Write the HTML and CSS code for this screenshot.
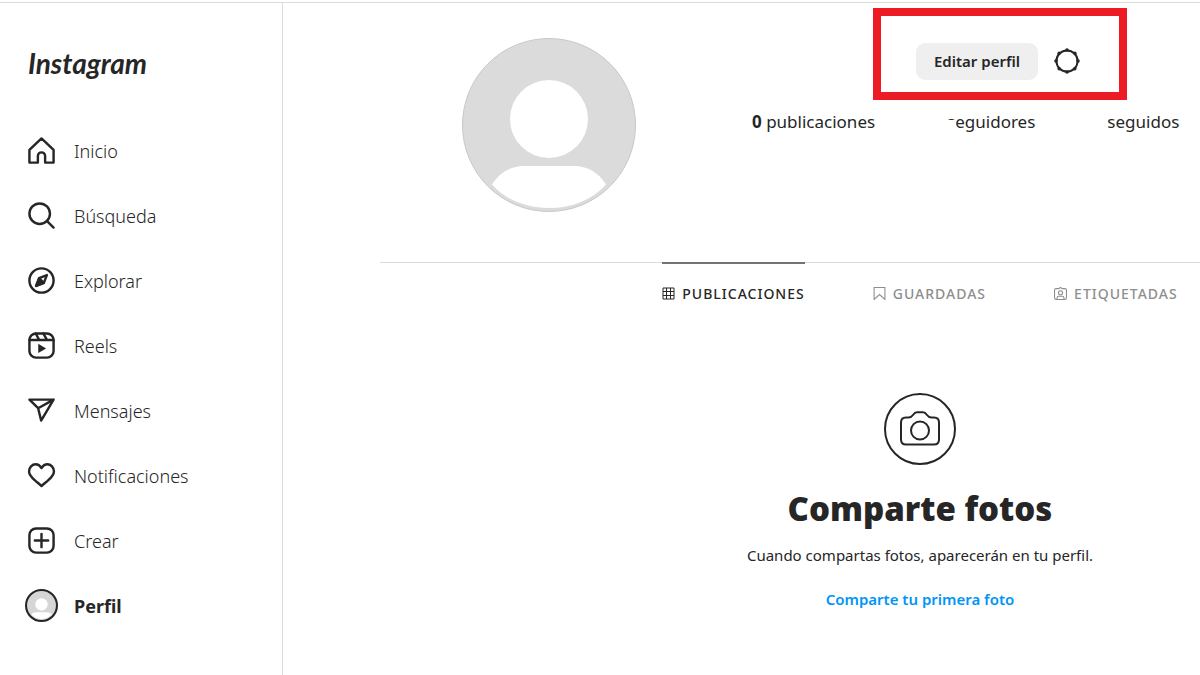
FILE: index.html
```html
<!DOCTYPE html>
<html lang="es">

<head>
  <meta charset="UTF-8">
  <meta name="viewport" content="width=device-width, initial-scale=1.0">
  <title>Instagram</title>
  <link rel="stylesheet" href="styles.css">
</head>

<body>
  <div class="page">
    <aside class="sidebar">
      <a class="logo" href="#">Instagram</a>
      <nav class="menu">
        <a class="menu-item" href="#">
          <span class="menu-icon">
            <svg viewBox="0 0 24 24"><path d="M9.005 16.545a2.997 2.997 0 0 1 2.997-2.997A2.997 2.997 0 0 1 15 16.545V22h7V11.543L12 2 2 11.543V22h7.005Z"/></svg>
          </span>
          Inicio
        </a>
        <a class="menu-item" href="#">
          <span class="menu-icon">
            <svg viewBox="0 0 24 24"><circle cx="10.5" cy="10.5" r="8.5"/><path d="m16.6 16.6 5.4 5.4"/></svg>
          </span>
          Búsqueda
        </a>
        <a class="menu-item" href="#">
          <span class="menu-icon">
            <svg viewBox="0 0 24 24"><circle cx="12" cy="12" r="10"/><path d="m13.94 13.95-6.4 2.51 2.52-6.4 6.39-2.51Z"/><path class="fill" d="m10.06 10.06 3.88 3.89-6.4 2.51Z"/></svg>
          </span>
          Explorar
        </a>
        <a class="menu-item" href="#">
          <span class="menu-icon">
            <svg viewBox="0 0 24 24"><rect x="2" y="2" width="20" height="20" rx="5.5"/><path d="M2.05 7.5h19.9M7.2 2.1l3 5.4M13.5 2l3 5.4"/><path class="fill play" d="M9.3 10.600v7.600l6.500-3.800Z"/></svg>
          </span>
          Reels
        </a>
        <a class="menu-item" href="#">
          <span class="menu-icon">
            <svg viewBox="0 0 24 24"><path d="M22 3 9.218 10.083M11.698 20.334 22 3.001H2l7.218 7.083 2.480 10.250Z"/></svg>
          </span>
          Mensajes
        </a>
        <a class="menu-item" href="#">
          <span class="menu-icon">
            <svg viewBox="0 0 24 24"><path d="M16.8 2.700c-2.300 0-3.600 1.200-4.800 3.100-1.200-1.900-2.500-3.100-4.800-3.100-3 0-5.500 2.600-5.500 5.900 0 3.100 2.400 5.200 4.900 7.400 1.900 1.700 3.900 3.300 5.400 4.700 1.500-1.400 3.500-3 5.400-4.700 2.500-2.200 4.900-4.300 4.900-7.400 0-3.300-2.500-5.900-5.500-5.900Z"/></svg>
          </span>
          Notificaciones
        </a>
        <a class="menu-item" href="#">
          <span class="menu-icon">
            <svg viewBox="0 0 24 24"><rect x="2" y="2" width="20" height="20" rx="5.5"/><path d="M6.5 12h11M12 6.500v11"/></svg>
          </span>
          Crear
        </a>
        <a class="menu-item active" href="#">
          <span class="menu-icon">
            <svg class="menu-avatar" viewBox="0 0 32 32"><circle class="ring" cx="16" cy="16" r="15"/><circle class="shape" cx="16" cy="15" r="6"/><path class="shape" d="M6 24.5q2-2 5-2h10q3 0 5 2a13 13 0 0 1-20 0Z"/></svg>
          </span>
          Perfil
        </a>
      </nav>
    </aside>

    <main class="main">
      <div class="profile">
        <header class="profile-header">
          <div class="profile-photo">
            <svg class="avatar" viewBox="0 0 174 174">
              <circle class="avatar-bg" cx="87" cy="87" r="86.5"/>
              <circle class="avatar-shape" cx="87" cy="81" r="39"/>
              <path class="avatar-shape" d="M30 146.500C38 134 49 128 62 128h50c13 0 24 6 32 18.500C130 162 110 170 87 170s-43-8-57-23.500Z"/>
            </svg>
          </div>
          <div class="profile-info">
            <div class="actions">
              <button class="edit-button" type="button">Editar perfil</button>
              <button class="settings-button" type="button" aria-label="Opciones">
                <svg viewBox="0 0 26 26">
                  <circle cx="13" cy="13" r="10.6"/>
                  <g class="fill">
                    <circle cx="13" cy="2" r="1.8"/>
                    <circle cx="20.8" cy="5.2" r="1.8"/>
                    <circle cx="24" cy="13" r="1.8"/>
                    <circle cx="20.8" cy="20.8" r="1.8"/>
                    <circle cx="13" cy="24" r="1.8"/>
                    <circle cx="5.2" cy="20.8" r="1.8"/>
                    <circle cx="2" cy="13" r="1.8"/>
                    <circle cx="5.2" cy="5.2" r="1.8"/>
                  </g>
                </svg>
              </button>
            </div>
            <ul class="stats">
              <li><b>0</b> publicaciones</li>
              <li class="followers">seguidores</li>
              <li>seguidos</li>
            </ul>
          </div>
        </header>

        <nav class="tabs">
          <a class="tab active" href="#">
            <svg viewBox="0 0 13 13"><path d="M1 1h11v11H1ZM1 4.500h11M1 8.500h11M4.500 1v11M8.500 1v11"/></svg>
            PUBLICACIONES
          </a>
          <a class="tab" href="#">
            <svg viewBox="0 0 12 12"><path d="M1 .5h10v11L6 7l-5 4.500Z"/></svg>
            GUARDADAS
          </a>
          <a class="tab" href="#">
            <svg viewBox="0 0 12 12"><path d="M2 1.500h2.500L6 .3l1.500 1.200H10q1.500 0 1.500 1.500v7q0 1.500-1.500 1.500H2Q.5 11.500.5 10V3Q.5 1.500 2 1.500ZM2.800 11.300V10q0-1.500 1.700-1.500h3q1.700 0 1.700 1.500v1.300"/><circle cx="6" cy="5.3" r="1.9"/></svg>
            ETIQUETADAS
          </a>
        </nav>

        <section class="empty">
          <svg class="camera" viewBox="0 0 72 72">
            <circle cx="36" cy="36" r="35"/>
            <path d="M22 24.500h2.500c2.500 0 3.500-1 4.500-2.500s2-2.700 4-2.700h6c2 0 3 1.200 4 2.700s2 2.500 4.500 2.500H50q5 0 5 5v17q0 5-5 5H22q-5 0-5-5v-17q0-5 5-5Z"/>
            <circle cx="36" cy="37.5" r="9"/>
          </svg>
          <h1>Comparte fotos</h1>
          <p>Cuando compartas fotos, aparecerán en tu perfil.</p>
          <a class="share-link" href="#">Comparte tu primera foto</a>
        </section>
      </div>
    </main>
  </div>
</body>

</html>
```
FILE: styles.css
```css
* {
  box-sizing: border-box;
}

body {
  margin: 0;
  padding-top: 2px;
  background-color: #fff;
  color: #262626;
  font-family: "Noto Sans", "Open Sans", sans-serif;
  font-size: 16px;
  overflow: hidden;
}

a {
  color: inherit;
  text-decoration: none;
}

svg {
  fill: none;
  stroke: currentColor;
}

svg .fill {
  fill: currentColor;
}

.page {
  display: flex;
  min-height: calc(100vh - 2px);
  border-top: 1px solid #dbdbdb;
}

/* sidebar */
.sidebar {
  flex: none;
  width: 283px;
  padding: 40px 25px 0;
  border-right: 1px solid #dbdbdb;
}

.logo {
  display: block;
  padding-left: 3px;
  font-family: "Lato", sans-serif;
  font-size: 28px;
  font-style: italic;
  font-weight: 700;
  line-height: 40px;
}

.menu {
  margin-top: 35px;
}

.menu-item {
  display: flex;
  align-items: center;
  gap: 16px;
  height: 65px;
  font-size: 18px;
  font-weight: 300;
}

.menu-item.active {
  font-weight: 700;
}

.menu-icon {
  display: flex;
  justify-content: center;
  width: 33px;
}

.menu-icon svg {
  width: 29px;
  height: 29px;
  stroke-width: 2;
  stroke-linecap: round;
  stroke-linejoin: round;
  overflow: visible;
}

.menu-icon .play {
  stroke: none;
}

.menu-icon .menu-avatar {
  width: 33px;
  height: 33px;
}

.menu-avatar .ring {
  fill: #d6d6d6;
}

.menu-avatar .shape {
  fill: #fff;
  stroke: none;
}

/* profile */
.main {
  flex: 1;
  min-width: 0;
  padding-left: 97px;
  overflow: hidden;
}

.profile {
  min-width: 1080px;
}

.profile-header {
  display: flex;
  gap: 34px;
  padding: 5px 0 50px;
}

.profile-photo {
  display: flex;
  justify-content: center;
  width: 338px;
  padding-top: 30px;
}

.avatar {
  width: 174px;
  height: 174px;
}

.avatar-bg {
  fill: #dbdbdb;
  stroke: #c8c8c8;
}

.avatar-shape {
  fill: #fff;
  stroke: none;
}

.actions {
  display: flex;
  align-items: center;
  gap: 16px;
  width: 254px;
  height: 92px;
  margin-left: 121px;
  padding: 14px 35px 0;
  border: 8px solid #ed1c24;
}

button {
  border: 0;
  padding: 0;
  color: inherit;
  font-family: inherit;
  cursor: pointer;
}

.edit-button {
  width: 122px;
  height: 37px;
  border-radius: 9px;
  background-color: #efefef;
  font-size: 15px;
  font-weight: 600;
}

.settings-button {
  display: flex;
  background: none;
}

.settings-button svg {
  width: 26px;
  height: 26px;
  stroke-width: 2;
}

.settings-button .fill {
  stroke: none;
}

.stats {
  display: flex;
  gap: 72px;
  margin: 10px 0 0;
  padding: 0;
  list-style: none;
  font-size: 17px;
  line-height: 24px;
}

.followers {
  position: relative;
}

/* blank patch over the first letter */
.followers::before {
  content: '';
  position: absolute;
  left: 0;
  bottom: 0;
  width: 9px;
  height: 14px;
  background-color: #fff;
}

.tabs {
  display: flex;
  justify-content: center;
  gap: 68px;
  border-top: 1px solid #dbdbdb;
}

.tab {
  display: flex;
  align-items: center;
  gap: 7px;
  height: 61px;
  color: #8e8e8e;
  font-size: 14px;
  font-weight: 500;
  letter-spacing: 1px;
}

.tab.active {
  color: #262626;
  box-shadow: 0 -1px #737373, inset 0 1px #737373;
}

.tab svg {
  width: 13px;
  height: 13px;
}

.empty {
  display: flex;
  flex-direction: column;
  align-items: center;
  padding-top: 69px;
}

.camera {
  width: 72px;
  height: 72px;
  stroke-width: 2;
}

.empty h1 {
  margin: 24px 0 0;
  font-size: 33px;
  font-weight: 900;
  line-height: 40px;
}

.empty p {
  margin: 16px 0 0;
  font-size: 15px;
  line-height: 20px;
}

.share-link {
  margin-top: 24px;
  color: #0095f6;
  font-size: 15px;
  font-weight: 600;
  line-height: 20px;
}
```
